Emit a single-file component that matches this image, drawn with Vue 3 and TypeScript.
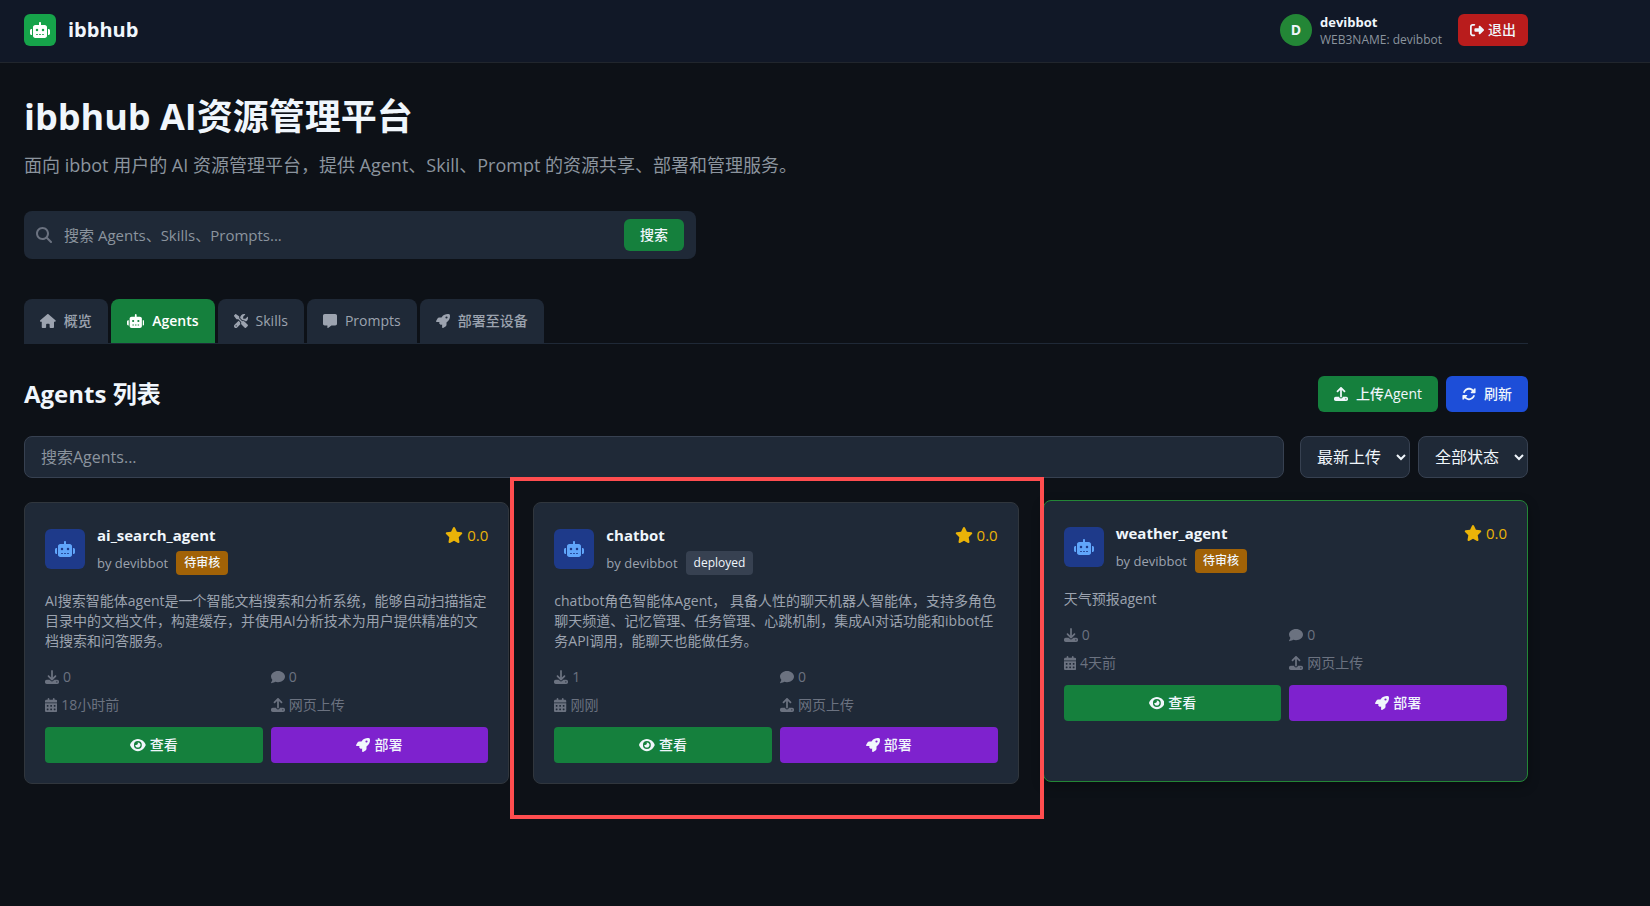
<script setup lang="ts">
import { ref } from 'vue'

interface Icon {
  w: number
  d: string
}

interface Agent {
  name: string
  author: string
  status: string
  pending: boolean
  rating: string
  description: string
  downloads: number
  comments: number
  updated: string
  source: string
  hovered?: boolean
  marked?: boolean
}

const cell = (x: number, y: number): string =>
  `M${x} ${y}v32c0 8.8 7.2 16 16 16h32c8.8 0 16-7.2 16-16v-32c0-8.8-7.2-16-16-16h-32c-8.8 0-16 7.2-16 16z`

const icons: Record<string, Icon> = {
  robot: { w: 640, d: 'M320 0c17.7 0 32 14.3 32 32V96H472c39.8 0 72 32.2 72 72V440c0 39.8-32.2 72-72 72H168c-39.8 0-72-32.2-72-72V168c0-39.8 32.2-72 72-72H288V32c0-17.7 14.3-32 32-32zM208 384c-8.8 0-16 7.2-16 16s7.2 16 16 16h32c8.8 0 16-7.2 16-16s-7.2-16-16-16H208zm96 0c-8.8 0-16 7.2-16 16s7.2 16 16 16h32c8.8 0 16-7.2 16-16s-7.2-16-16-16H304zm96 0c-8.8 0-16 7.2-16 16s7.2 16 16 16h32c8.8 0 16-7.2 16-16s-7.2-16-16-16H400zM264 256a40 40 0 1 0 -80 0 40 40 0 1 0 80 0zm152 40a40 40 0 1 0 0-80 40 40 0 1 0 0 80zM48 224H64V416H48c-26.5 0-48-21.5-48-48V272c0-26.5 21.5-48 48-48zm544 0c26.5 0 48 21.5 48 48v96c0 26.5-21.5 48-48 48H576V224h16z' },
  home: { w: 576, d: 'M575.8 255.5c0 18-15 32.1-32 32.1h-32l.7 160.2c0 2.7-.2 5.4-.5 8.1V472c0 22.1-17.9 40-40 40H456c-1.1 0-2.2 0-3.3-.1c-1.4 .1-2.8 .1-4.2 .1H416 392c-22.1 0-40-17.9-40-40V448 384c0-17.7-14.3-32-32-32H256c-17.7 0-32 14.3-32 32v64 24c0 22.1-17.9 40-40 40H160 128.1c-1.5 0-3-.1-4.5-.2c-1.2 .1-2.4 .2-3.6 .2H104c-22.1 0-40-17.9-40-40V360c0-.9 0-1.9 .1-2.8V287.6H32c-18 0-32-14-32-32.1c0-9 3-17 10-24L266.4 8c7-7 15-8 22-8s15 2 21 7L564.8 231.5c8 7 12 15 11 24z' },
  search: { w: 512, d: 'M416 208c0 45.9-14.9 88.3-40 122.7L502.6 457.4c12.5 12.5 12.5 32.8 0 45.3s-32.8 12.5-45.3 0L330.7 376c-34.4 25.2-76.8 40-122.7 40C93.1 416 0 322.9 0 208S93.1 0 208 0S416 93.1 416 208zM208 352a144 144 0 1 0 0-288 144 144 0 1 0 0 288z' },
  star: { w: 576, d: 'M316.9 18C311.6 7 300.4 0 288.1 0s-23.4 7-28.8 18L195 150.3 51.4 171.5c-12 1.8-22 10.2-25.7 21.7s-.7 24.2 7.9 32.7L137.8 329 113.2 474.7c-2 12 3 24.2 12.9 31.3s23 8 33.8 2.3l128.3-68.5 128.3 68.5c10.8 5.7 23.9 4.9 33.8-2.3s14.9-19.3 12.9-31.3L438.5 329 542.7 225.9c8.6-8.5 11.7-21.2 7.9-32.7s-13.7-19.9-25.7-21.7L381.2 150.3 316.9 18z' },
  logout: { w: 512, d: 'M377.9 105.9L500.7 228.7c7.2 7.2 11.3 17.1 11.3 27.3s-4.1 20.1-11.3 27.3L377.9 406.1c-6.4 6.4-15 9.9-24 9.9c-18.7 0-33.9-15.2-33.9-33.9l0-62.1-128 0c-17.7 0-32-14.3-32-32l0-64c0-17.7 14.3-32 32-32l128 0 0-62.1c0-18.7 15.2-33.9 33.9-33.9c9 0 17.6 3.6 24 9.9zM160 96L96 96c-17.7 0-32 14.3-32 32l0 256c0 17.7 14.3 32 32 32l64 0c17.7 0 32 14.3 32 32s-14.3 32-32 32l-64 0c-53 0-96-43-96-96L0 128C0 75 43 32 96 32l64 0c17.7 0 32 14.3 32 32s-14.3 32-32 32z' },
  message: { w: 512, d: 'M64 0C28.7 0 0 28.7 0 64V352c0 35.3 28.7 64 64 64h96v80c0 6.1 3.4 11.6 8.8 14.3s11.9 2.1 16.8-1.5L309.3 416H448c35.3 0 64-28.7 64-64V64c0-35.3-28.7-64-64-64H64z' },
  comment: { w: 512, d: 'M512 240c0 114.9-114.6 208-256 208c-37.1 0-72.3-6.4-104.1-17.9c-11.9 8.7-31.3 20.6-54.3 30.6C73.6 471.1 44.7 480 16 480c-6.5 0-12.3-3.9-14.8-9.9c-2.5-6-1.1-12.8 3.4-17.4l.3-.3c.3-.3 .7-.7 1.3-1.4c1.1-1.2 2.8-3.1 4.9-5.7c4.1-5 9.6-12.4 15.2-21.6c10-16.6 19.5-38.4 21.4-62.9C17.7 326.8 0 285.1 0 240C0 125.1 114.6 32 256 32s256 93.1 256 208z' },
  rocket: { w: 512, d: 'M156.6 384.9L125.7 354c-8.5-8.5-11.5-20.8-7.7-32.2c3-8.9 7-20.5 11.8-33.8L24 288c-8.6 0-16.6-4.6-20.9-12.1s-4.2-16.7 .2-24.1l52.5-88.5c13-21.9 36.5-35.3 61.9-35.3l82.3 0c2.4-4 4.8-7.7 7.2-11.3C289.1-4.1 411.1-8.1 483.9 5.3c11.6 2.1 20.6 11.2 22.8 22.8c13.4 72.9 9.3 194.8-111.4 276.7c-3.5 2.4-7.3 4.8-11.3 7.2v82.3c0 25.4-13.4 49-35.3 61.9l-88.5 52.5c-7.4 4.4-16.6 4.5-24.1 .2s-12.1-12.2-12.1-20.9V380.8c-14.1 4.9-26.4 8.9-35.7 11.9c-11.2 3.6-23.4 .5-31.8-7.8zM384 168a40 40 0 1 0 0-80 40 40 0 1 0 0 80z' },
  upload: { w: 512, d: 'M288 109.3V352c0 17.7-14.3 32-32 32s-32-14.3-32-32V109.3l-73.4 73.4c-12.5 12.5-32.8 12.5-45.3 0s-12.5-32.8 0-45.3l128-128c12.5-12.5 32.8-12.5 45.3 0l128 128c12.5 12.5 12.5 32.8 0 45.3s-32.8 12.5-45.3 0L288 109.3zM64 352H192c0 35.3 28.7 64 64 64s64-28.7 64-64H448c35.3 0 64 28.7 64 64v32c0 35.3-28.7 64-64 64H64c-35.3 0-64-28.7-64-64V416c0-35.3 28.7-64 64-64zM432 456a24 24 0 1 0 0-48 24 24 0 1 0 0 48z' },
  download: { w: 512, d: 'M288 32c0-17.7-14.3-32-32-32s-32 14.3-32 32V274.7l-73.4-73.4c-12.5-12.5-32.8-12.5-45.3 0s-12.5 32.8 0 45.3l128 128c12.5 12.5 32.8 12.5 45.3 0l128-128c12.5-12.5 12.5-32.8 0-45.3s-32.8-12.5-45.3 0L288 274.7V32zM64 352c-35.3 0-64 28.7-64 64v32c0 35.3 28.7 64 64 64H448c35.3 0 64-28.7 64-64V416c0-35.3-28.7-64-64-64H346.5l-45.3 45.3c-25 25-65.5 25-90.5 0L165.5 352H64zm368 56a24 24 0 1 1 0 48 24 24 0 1 1 0-48z' },
  calendar: {
    w: 448,
    d: 'M128 0c17.7 0 32 14.3 32 32V64H288V32c0-17.7 14.3-32 32-32s32 14.3 32 32V64h48c26.5 0 48 21.5 48 48v48H0V112C0 85.5 21.5 64 48 64H96V32c0-17.7 14.3-32 32-32zM0 192H448V464c0 26.5-21.5 48-48 48H48c-26.5 0-48-21.5-48-48V192z'
      + [[64, 272], [192, 272], [320, 272], [64, 400], [192, 400], [320, 400]].map(([x, y]) => cell(x, y)).join('')
  },
  refresh: { w: 512, d: 'M142.9 142.9c62.2-62.2 162.7-62.5 225.3-1L327 183c-6.9 6.9-8.9 17.2-5.2 26.2s12.5 14.8 22.2 14.8H472c13.3 0 24-10.7 24-24V72c0-9.7-5.8-18.5-14.8-22.2s-19.3-1.7-26.2 5.2L413.4 96.6c-87.6-86.5-228.7-86.2-315.8 1C73.2 122 55.6 150.7 44.8 181.4c-5.9 16.7 2.9 34.9 19.5 40.8s34.9-2.9 40.8-19.5c7.7-21.8 20.2-42.3 37.8-59.8zM16 312V440c0 9.7 5.8 18.5 14.8 22.2s19.3 1.7 26.2-5.2l41.6-41.6c87.6 86.5 228.7 86.2 315.8-1c24.4-24.4 42.1-53.1 52.9-83.7c5.9-16.7-2.9-34.9-19.5-40.8s-34.9 2.9-40.8 19.5c-7.7 21.8-20.2 42.3-37.8 59.8c-62.2 62.2-162.7 62.5-225.3 1L185 329c6.9-6.9 8.9-17.2 5.2-26.2s-12.5-14.8-22.2-14.8H40c-13.3 0-24 10.7-24 24z' },
  eye: { w: 576, d: 'M288 32c-80.8 0-145.5 36.8-192.6 80.6C48.6 156 17.3 208 2.5 243.7c-3.3 7.9-3.3 16.7 0 24.6C17.3 304 48.6 356 95.4 399.4C142.5 443.2 207.2 480 288 480s145.5-36.8 192.6-80.6c46.8-43.5 78.1-95.4 93-131.1c3.3-7.9 3.3-16.7 0-24.6c-14.9-35.7-46.2-87.7-93-131.1C433.5 68.8 368.8 32 288 32zM144 256a144 144 0 1 1 288 0 144 144 0 1 1 -288 0zm144-64c0 35.3-28.7 64-64 64c-7.1 0-13.9-1.2-20.3-3.3c-5.5-1.8-11.9 1.6-11.7 7.4c.3 6.9 1.3 13.8 3.2 20.7c13.7 51.2 66.4 81.6 117.6 67.9s81.6-66.4 67.9-117.6c-11.1-41.5-47.8-69.4-88.6-71.1c-5.8-.2-9.2 6.1-7.4 11.7c2.1 6.4 3.3 13.2 3.3 20.3z' },
  tools: { w: 512, d: 'M78.6 5C69.1-2.4 55.6-1.5 47 7L7 47c-8.5 8.5-9.4 22-2.1 31.6l80 104c4.5 5.9 11.6 9.4 19 9.4h54.1l109 109c-14.7 29-10 65.4 14.3 89.6l112 112c12.5 12.5 32.8 12.5 45.3 0l64-64c12.5-12.5 12.5-32.8 0-45.3l-112-112c-24.2-24.2-60.6-29-89.6-14.3l-109-109V104c0-7.5-3.5-14.5-9.4-19L78.6 5zM19.9 396.1C7.2 408.8 0 426.1 0 444.1C0 481.6 30.4 512 67.9 512c18 0 35.3-7.2 48-19.9L233.7 374.3c-7.8-20.9-9-43.6-3.6-65.1l-61.7-61.7L19.9 396.1zM512 144c0-10.5-1.1-20.7-3.2-30.5c-2.4-11.2-16.1-14.1-24.2-6l-63.9 63.9c-3 3-7.1 4.7-11.3 4.7H352c-8.8 0-16-7.2-16-16V102.6c0-4.2 1.7-8.3 4.7-11.3l63.9-63.9c8.1-8.1 5.2-21.8-6-24.2C388.7 1.1 378.5 0 368 0C288.5 0 224 64.5 224 144l0 .8 85.3 85.3c36-9.1 75.8 .5 104 28.7L429 274.5c49-23 83-72.8 83-130.5zM56 432a24 24 0 1 1 48 0 24 24 0 1 1 -48 0z' }
}

const tabs = [
  { id: 'overview', label: '概览', icon: icons.home },
  { id: 'agents', label: 'Agents', icon: icons.robot },
  { id: 'skills', label: 'Skills', icon: icons.tools },
  { id: 'prompts', label: 'Prompts', icon: icons.message },
  { id: 'deploy', label: '部署至设备', icon: icons.rocket }
]

const activeTab = ref('agents')
const query = ref('')
const agentQuery = ref('')
const sort = ref('newest')
const status = ref('all')

const agents: Agent[] = [
  {
    name: 'ai_search_agent',
    author: 'devibbot',
    status: '待审核',
    pending: true,
    rating: '0.0',
    description: 'AI搜索智能体agent是一个智能文档搜索和分析系统，能够自动扫描指定目录中的文档文件，构建缓存，并使用AI分析技术为用户提供精准的文档搜索和问答服务。',
    downloads: 0,
    comments: 0,
    updated: '18小时前',
    source: '网页上传'
  },
  {
    name: 'chatbot',
    author: 'devibbot',
    status: 'deployed',
    pending: false,
    rating: '0.0',
    description: 'chatbot角色智能体Agent， 具备人性的聊天机器人智能体，支持多角色聊天频道、记忆管理、任务管理、心跳机制，集成AI对话功能和ibbot任务API调用，能聊天也能做任务。',
    downloads: 1,
    comments: 0,
    updated: '刚刚',
    source: '网页上传',
    marked: true
  },
  {
    name: 'weather_agent',
    author: 'devibbot',
    status: '待审核',
    pending: true,
    rating: '0.0',
    description: '天气预报agent',
    downloads: 0,
    comments: 0,
    updated: '4天前',
    source: '网页上传',
    hovered: true
  }
]

const statsOf = (a: Agent) => [
  { icon: icons.download, text: String(a.downloads) },
  { icon: icons.comment, text: String(a.comments) },
  { icon: icons.calendar, text: a.updated },
  { icon: icons.upload, text: a.source }
]
</script>

<template>
  <div class="page">
    <header class="topbar">
      <div class="container topbar-inner">
        <div class="brand">
          <span class="logo">
            <svg class="icon" :viewBox="`0 0 ${icons.robot.w} 512`" aria-hidden="true"><path :d="icons.robot.d" /></svg>
          </span>
          <span class="brand-name">ibbhub</span>
        </div>
        <div class="account">
          <span class="avatar">D</span>
          <div class="identity">
            <span class="user">devibbot</span>
            <span class="web3">WEB3NAME: devibbot</span>
          </div>
          <button type="button" class="logout">
            <svg class="icon" :viewBox="`0 0 ${icons.logout.w} 512`" aria-hidden="true"><path :d="icons.logout.d" /></svg>
            退出
          </button>
        </div>
      </div>
    </header>

    <main class="container main">
      <h1>ibbhub AI资源管理平台</h1>
      <p class="lead">面向 ibbot 用户的 AI 资源管理平台，提供 Agent、Skill、Prompt 的资源共享、部署和管理服务。</p>

      <form class="search" role="search" @submit.prevent>
        <svg class="icon" :viewBox="`0 0 ${icons.search.w} 512`" aria-hidden="true"><path :d="icons.search.d" /></svg>
        <input v-model="query" type="text" aria-label="搜索" placeholder="搜索 Agents、Skills、Prompts..." />
        <button type="submit">搜索</button>
      </form>

      <nav class="tabs">
        <button
          v-for="tab in tabs"
          :key="tab.id"
          type="button"
          class="tab"
          :class="{ active: tab.id === activeTab }"
          @click="activeTab = tab.id"
        >
          <svg class="icon" :viewBox="`0 0 ${tab.icon.w} 512`" aria-hidden="true"><path :d="tab.icon.d" /></svg>
          {{ tab.label }}
        </button>
      </nav>

      <div class="list-head">
        <h2>Agents 列表</h2>
        <div class="actions">
          <button type="button" class="action upload">
            <svg class="icon" :viewBox="`0 0 ${icons.upload.w} 512`" aria-hidden="true"><path :d="icons.upload.d" /></svg>
            上传Agent
          </button>
          <button type="button" class="action refresh">
            <svg class="icon" :viewBox="`0 0 ${icons.refresh.w} 512`" aria-hidden="true"><path :d="icons.refresh.d" /></svg>
            刷新
          </button>
        </div>
      </div>

      <div class="filters">
        <input v-model="agentQuery" type="text" class="field grow" aria-label="搜索Agents" placeholder="搜索Agents..." />
        <div class="selects">
          <select v-model="sort" class="field" aria-label="排序">
            <option value="newest">最新上传</option>
          </select>
          <select v-model="status" class="field" aria-label="状态">
            <option value="all">全部状态</option>
          </select>
        </div>
      </div>

      <div class="cards">
        <article v-for="agent in agents" :key="agent.name" class="card" :class="{ hovered: agent.hovered }">
          <div class="card-head">
            <span class="agent-icon">
              <svg class="icon" :viewBox="`0 0 ${icons.robot.w} 512`" aria-hidden="true"><path :d="icons.robot.d" /></svg>
            </span>
            <div class="agent-title">
              <h3>{{ agent.name }}</h3>
              <div class="byline">
                <span>by {{ agent.author }}</span>
                <span class="badge" :class="{ pending: agent.pending }">{{ agent.status }}</span>
              </div>
            </div>
            <span class="rating">
              <svg class="icon" :viewBox="`0 0 ${icons.star.w} 512`" aria-hidden="true"><path :d="icons.star.d" /></svg>
              {{ agent.rating }}
            </span>
          </div>
          <p class="description">{{ agent.description }}</p>
          <div class="stats">
            <span v-for="(stat, i) in statsOf(agent)" :key="i" class="stat">
              <svg class="icon" :viewBox="`0 0 ${stat.icon.w} 512`" aria-hidden="true"><path :d="stat.icon.d" /></svg>
              {{ stat.text }}
            </span>
          </div>
          <div class="card-actions">
            <button type="button" class="view">
              <svg class="icon" :viewBox="`0 0 ${icons.eye.w} 512`" aria-hidden="true"><path :d="icons.eye.d" /></svg>
              查看
            </button>
            <button type="button" class="deploy">
              <svg class="icon" :viewBox="`0 0 ${icons.rocket.w} 512`" aria-hidden="true"><path :d="icons.rocket.d" /></svg>
              部署
            </button>
          </div>
          <span v-if="agent.marked" class="marker" aria-hidden="true"></span>
        </article>
      </div>
    </main>
  </div>
</template>

<style>
body {
  margin: 0;
  background: #0d1117;
}
</style>

<style scoped>
* {
  box-sizing: border-box;
}

.page {
  min-height: 100vh;
  color: #f0f6fc;
  background: #0d1117;
  font-family: "Open Sans", "Noto Sans CJK SC", sans-serif;
  font-size: 16px;
  line-height: 24px;
}

h1,
h2,
h3,
p {
  margin: 0;
}

button,
input,
select {
  font-family: inherit;
}

button {
  border: 0;
  color: #f0f6fc;
  font-size: 14px;
  line-height: 20px;
  font-weight: 500;
  cursor: pointer;
}

.icon {
  flex: none;
  height: 14px;
  fill: currentColor;
}

.container {
  max-width: 1552px;
  padding: 0 24px;
}

.topbar {
  background: #111827;
  border-bottom: 1px solid #21262d;
}

.topbar-inner {
  display: flex;
  justify-content: space-between;
  align-items: center;
  padding-top: 12px;
  padding-bottom: 14px;
}

.brand,
.account {
  display: flex;
  align-items: center;
}

.brand {
  gap: 12px;
}

.logo {
  display: grid;
  place-items: center;
  width: 32px;
  height: 32px;
  color: #fff;
  background: #16a34a;
  border-radius: 6px;
}

.logo .icon {
  height: 16px;
}

.brand-name {
  font-size: 20px;
  line-height: 28px;
  font-weight: 700;
}

.avatar {
  display: grid;
  place-items: center;
  width: 32px;
  height: 32px;
  margin-right: 8px;
  border-radius: 50%;
  background: #238636;
  font-size: 14px;
  font-weight: 700;
}

.identity {
  display: flex;
  flex-direction: column;
  margin-right: 16px;
}

.user {
  font-size: 13px;
  line-height: 20px;
  font-weight: 700;
}

.web3 {
  color: #8b949e;
  font-size: 12px;
  line-height: 16px;
}

.logout {
  display: flex;
  align-items: center;
  gap: 4px;
  padding: 6px 12px;
  border-radius: 6px;
  background: #b91c1c;
}

.main {
  padding-top: 32px;
  padding-bottom: 32px;
}

h1 {
  margin-bottom: 12px;
  font-size: 36px;
  line-height: 44px;
  font-weight: 700;
}

.lead {
  margin-bottom: 32px;
  color: #8b949e;
  font-size: 18px;
  line-height: 28px;
}

.search {
  display: flex;
  align-items: center;
  max-width: 672px;
  height: 48px;
  margin-bottom: 40px;
  padding: 0 12px;
  border-radius: 8px;
  background: #1f2937;
}

.search .icon {
  height: 16px;
  color: #6b7280;
}

.search input {
  flex: 1;
  min-width: 0;
  padding: 0 12px;
  border: 0;
  outline: 0;
  background: transparent;
  color: #f0f6fc;
  font-size: 15px;
  line-height: 24px;
}

input::placeholder {
  color: #8b949e;
  opacity: 1;
}

.search button {
  padding: 6px 16px;
  border-radius: 6px;
  background: #15803d;
}

.tabs {
  display: flex;
  gap: 3px;
  margin-bottom: 32px;
  border-bottom: 1px solid #1f2937;
}

.tab {
  display: flex;
  align-items: center;
  gap: 8px;
  padding: 12px 16px;
  border-radius: 8px 8px 0 0;
  background: #1f2937;
  color: #9ca3af;
}

.tab.active {
  background: #15803d;
  color: #fff;
  font-weight: 600;
}

.list-head {
  display: flex;
  justify-content: space-between;
  align-items: center;
  margin-bottom: 24px;
}

h2 {
  font-size: 24px;
  line-height: 32px;
  font-weight: 700;
}

.actions,
.selects {
  display: flex;
  gap: 8px;
}

.action {
  display: flex;
  align-items: center;
  gap: 8px;
  padding: 8px 16px;
  border-radius: 6px;
}

.upload,
.view {
  background: #15803d;
}

.refresh {
  background: #1d4ed8;
}

.filters {
  display: flex;
  gap: 16px;
  margin-bottom: 24px;
}

.field {
  height: 42px;
  border: 1px solid #374151;
  border-radius: 8px;
  background-color: #1f2937;
  color: #f0f6fc;
  font-size: 16px;
  line-height: 24px;
}

.grow {
  flex: 1;
  min-width: 0;
  padding: 8px 16px;
}

select.field {
  width: 110px;
  padding: 0 0 0 12px;
}

.cards {
  display: grid;
  grid-template-columns: repeat(3, minmax(0, 1fr));
  gap: 24px;
}

.card {
  position: relative;
  padding: 20px;
  border: 1px solid #30363d;
  border-radius: 8px;
  background: #1f2937;
}

.card.hovered {
  border-color: #238636;
  box-shadow: 0 4px 12px rgba(0, 0, 0, 0.3);
  transform: translateY(-2px);
}

.marker {
  position: absolute;
  z-index: 2;
  inset: -26px -26px -36px -24px;
  border: 4px solid #ff4d4f;
  pointer-events: none;
}

.card:has(.marker) {
  z-index: 2;
}

.card-head {
  display: flex;
  align-items: center;
  gap: 12px;
  margin-bottom: 16px;
}

.agent-icon {
  display: grid;
  place-items: center;
  width: 40px;
  height: 40px;
  border-radius: 6px;
  background: #1e3a8a;
  color: #60a5fa;
}

.agent-icon .icon,
.rating .icon {
  height: 16px;
}

.agent-title {
  flex: 1;
  min-width: 0;
}

h3 {
  margin-bottom: 4px;
  font-size: 15px;
  line-height: 24px;
  font-weight: 700;
}

.byline {
  display: flex;
  align-items: center;
  gap: 8px;
  color: #9ca3af;
  font-size: 13px;
}

.badge {
  padding: 4px 8px;
  border-radius: 4px;
  background: #374151;
  color: #f0f6fc;
  font-size: 12px;
  line-height: 16px;
  font-weight: 500;
}

.badge.pending {
  background: #a16207;
}

.rating {
  display: flex;
  align-items: center;
  align-self: flex-start;
  gap: 4px;
  color: #eab308;
  font-size: 15px;
}

.description {
  margin-bottom: 16px;
  color: #9ca3af;
  font-size: 14px;
  line-height: 20px;
}

.stats {
  display: grid;
  grid-template-columns: 1fr 1fr;
  gap: 8px;
  margin-bottom: 12px;
  color: #6b7280;
  font-size: 14px;
  line-height: 20px;
}

.stat {
  display: flex;
  align-items: center;
  gap: 4px;
}

.card-actions {
  display: grid;
  grid-template-columns: 1fr 1fr;
  gap: 8px;
}

.card-actions button {
  display: flex;
  justify-content: center;
  align-items: center;
  gap: 4px;
  padding: 8px;
  border-radius: 4px;
}

.deploy {
  background: #7e22ce;
}
</style>
